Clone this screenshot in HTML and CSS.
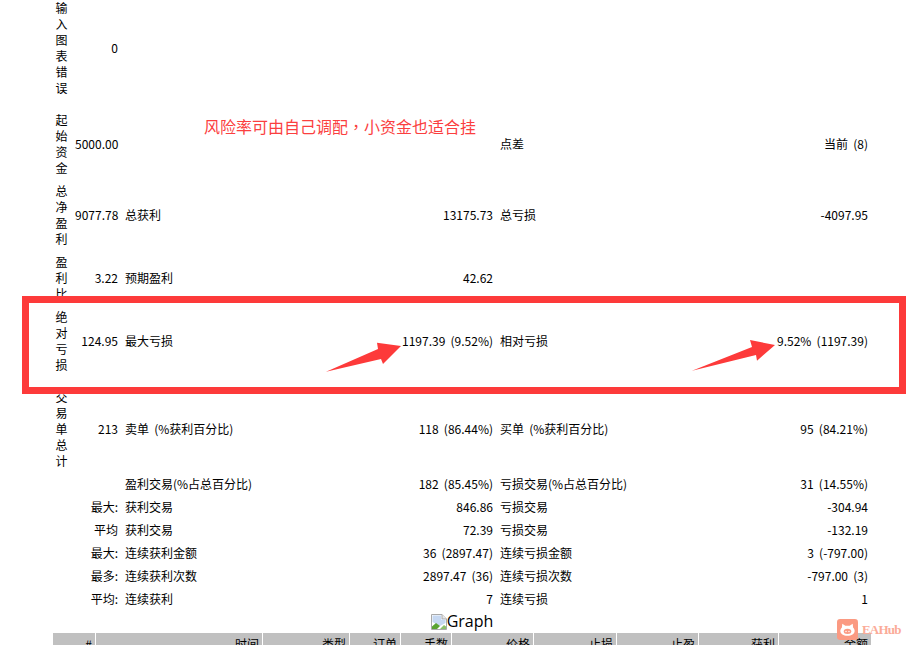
FILE: index.html
```html
<!DOCTYPE html>
<html lang="zh-CN">
<head>
<meta charset="utf-8">
<title>Strategy Tester Report</title>
<link rel="stylesheet" href="styles.css">
</head>
<body>
<main class="report">
  <table class="summary">
    <colgroup>
      <col class="c1"><col class="c2"><col class="c3"><col class="c4"><col class="c5"><col class="c6">
    </colgroup>
    <tr><td class="v">输入图表错误</td><td class="r">0</td><td></td><td></td><td></td><td></td></tr>
    <tr class="spacer"><td colspan="6"></td></tr>
    <tr><td class="v">起始资金</td><td class="r">5000.00</td><td></td><td></td><td>点差</td><td class="r">当前 (8)</td></tr>
    <tr><td class="v">总净盈利</td><td class="r">9077.78</td><td>总获利</td><td class="r">13175.73</td><td>总亏损</td><td class="r">-4097.95</td></tr>
    <tr><td class="v">盈利比</td><td class="r">3.22</td><td>预期盈利</td><td class="r">42.62</td><td></td><td></td></tr>
    <tr><td class="v">绝对亏损</td><td class="r">124.95</td><td>最大亏损</td><td class="r">1197.39 (9.52%)</td><td>相对亏损</td><td class="r">9.52% (1197.39)</td></tr>
    <tr class="spacer"><td colspan="6"></td></tr>
    <tr><td class="v">交易单总计</td><td class="r">213</td><td>卖单 (%获利百分比)</td><td class="r">118 (86.44%)</td><td>买单 (%获利百分比)</td><td class="r">95 (84.21%)</td></tr>
    <tr><td colspan="2"></td><td>盈利交易(%占总百分比)</td><td class="r">182 (85.45%)</td><td>亏损交易(%占总百分比)</td><td class="r">31 (14.55%)</td></tr>
    <tr><td colspan="2" class="r">最大:</td><td>获利交易</td><td class="r">846.86</td><td>亏损交易</td><td class="r">-304.94</td></tr>
    <tr><td colspan="2" class="r">平均</td><td>获利交易</td><td class="r">72.39</td><td>亏损交易</td><td class="r">-132.19</td></tr>
    <tr><td colspan="2" class="r">最大:</td><td>连续获利金额</td><td class="r">36 (2897.47)</td><td>连续亏损金额</td><td class="r">3 (-797.00)</td></tr>
    <tr><td colspan="2" class="r">最多:</td><td>连续获利次数</td><td class="r">2897.47 (36)</td><td>连续亏损次数</td><td class="r">-797.00 (3)</td></tr>
    <tr><td colspan="2" class="r">平均:</td><td>连续获利</td><td class="r">7</td><td>连续亏损</td><td class="r">1</td></tr>
  </table>

  <div class="graph">
    <svg class="broken" viewBox="0 0 16 16" width="16" height="16" aria-hidden="true">
      <path d="M0.5 0.5H11L15.5 5V15.5H0.5Z" fill="#fff" stroke="#a9a9a9"/>
      <path d="M11 0.5V5H15.5" fill="#e8e8e8" stroke="#a9a9a9"/>
      <path d="M1.5 1.5H10V5.5H14.5V9L9 12L1.5 8Z" fill="#c6d8f2"/>
      <path d="M1 15V12.5L5 9L9 12L6 15Z" fill="#5aa432"/>
      <path d="M9 15L13 11L15 12.5V15Z" fill="#8cc06c"/>
    </svg><span>Graph</span>
  </div>

  <table class="trades">
    <colgroup>
      <col class="t1"><col class="t2"><col class="t3"><col class="t4"><col class="t5"><col class="t6"><col class="t7"><col class="t8"><col class="t9"><col class="t10">
    </colgroup>
    <tr><th>#</th><th>时间</th><th>类型</th><th>订单</th><th>手数</th><th>价格</th><th>止损</th><th>止盈</th><th>获利</th><th>金额</th></tr>
  </table>
</main>

<p class="note">风险率可由自己调配<span class="comma" lang="zh-TW">，</span>小资金也适合挂</p>
<div class="frame"></div>
<svg class="arrows" viewBox="0 0 908 645" width="908" height="645" aria-hidden="true">
  <polygon points="326,371.7 378,349 377,342.7 401,346 383,364 381,359"/>
  <polygon points="692,370.7 752,347 750,340 775,345 757,360.7 756,355"/>
</svg>
<div class="brand">
  <svg viewBox="0 0 20 20" width="21" height="21" aria-hidden="true">
    <rect width="20" height="20" rx="3" fill="#fb9a82"/>
    <path d="M5 4.5L8 6.5H12L15 4.5L15.3 8.2C16.3 9.2 16.8 10.3 16.8 11.5C16.8 14.3 13.8 16 10 16S3.2 14.3 3.2 11.5C3.2 10.3 3.7 9.2 4.7 8.2Z" fill="#fff"/>
    <ellipse cx="10" cy="11.8" rx="3.6" ry="2.4" fill="#fb9a82"/>
    <circle cx="8.6" cy="11.8" r=".7" fill="#fff"/>
    <circle cx="11.4" cy="11.8" r=".7" fill="#fff"/>
  </svg>
  <span>EAHub</span>
</div>
</body>
</html>
```

FILE: styles.css
```css
html, body {
  margin: 0;
  padding: 0;
  height: 645px;
  overflow: hidden;
  background: #fff;
}

body {
  position: relative;
  font-family: "Noto Sans CJK SC", "Noto Sans", sans-serif;
  font-size: 12px;
  line-height: 16px;
  color: #000;
}

.report {
  width: 820px;
  margin-left: 52px;
  margin-top: -4px;
  display: flow-root;
}

table {
  width: 820px;
  table-layout: fixed;
  border-collapse: separate;
  border-spacing: 1px;
  word-spacing: 2.5px;
}

td, th {
  padding: 3px;
  font-weight: normal;
  text-align: left;
  vertical-align: middle;
}

td.v {
  padding-left: 2.5px;
  padding-right: 3.5px;
}

.r { text-align: right; }

.spacer td {
  padding: 0;
  height: 8px;
  line-height: 0;
}

.c1 { width: 18px; }
.c2 { width: 49px; }
.c3 { width: 150px; }
.c4 { width: 223px; }
.c5 { width: 150px; }
.c6 { width: 223px; }

.graph {
  height: 21px;
  display: flex;
  justify-content: center;
  align-items: center;
  font-family: "Open Sans", sans-serif;
  font-size: 16px;
  line-height: 21px;
}

.broken { flex: none; }

.trades th {
  background: #c0c0c0;
  text-align: right;
}

.t1 { width: 42px; }
.t2 { width: 166px; }
.t3 { width: 86px; }
.t4 { width: 50px; }
.t5 { width: 50px; }
.t6 { width: 81px; }
.t7 { width: 82px; }
.t8 { width: 81px; }
.t9 { width: 79px; }
.t10 { width: 92px; }

.note {
  position: absolute;
  left: 204px;
  top: 114px;
  margin: 0;
  font-size: 16px;
  line-height: 24px;
  color: #fb3f3f;
  white-space: nowrap;
}

.comma {
  font-family: "Noto Sans CJK TC", sans-serif;
}

.frame {
  position: absolute;
  left: 22px;
  top: 296px;
  width: 870px;
  height: 84px;
  border: 7px solid #fd3a3a;
}

.arrows {
  position: absolute;
  left: 0;
  top: 0;
  fill: #fd3a3a;
}

.brand {
  position: absolute;
  left: 837px;
  top: 619px;
  display: flex;
  align-items: center;
  gap: 4px;
  font-family: "Liberation Serif", serif;
  font-size: 13px;
  font-weight: bold;
  letter-spacing: -0.8px;
  color: #fbab98;
}
```
